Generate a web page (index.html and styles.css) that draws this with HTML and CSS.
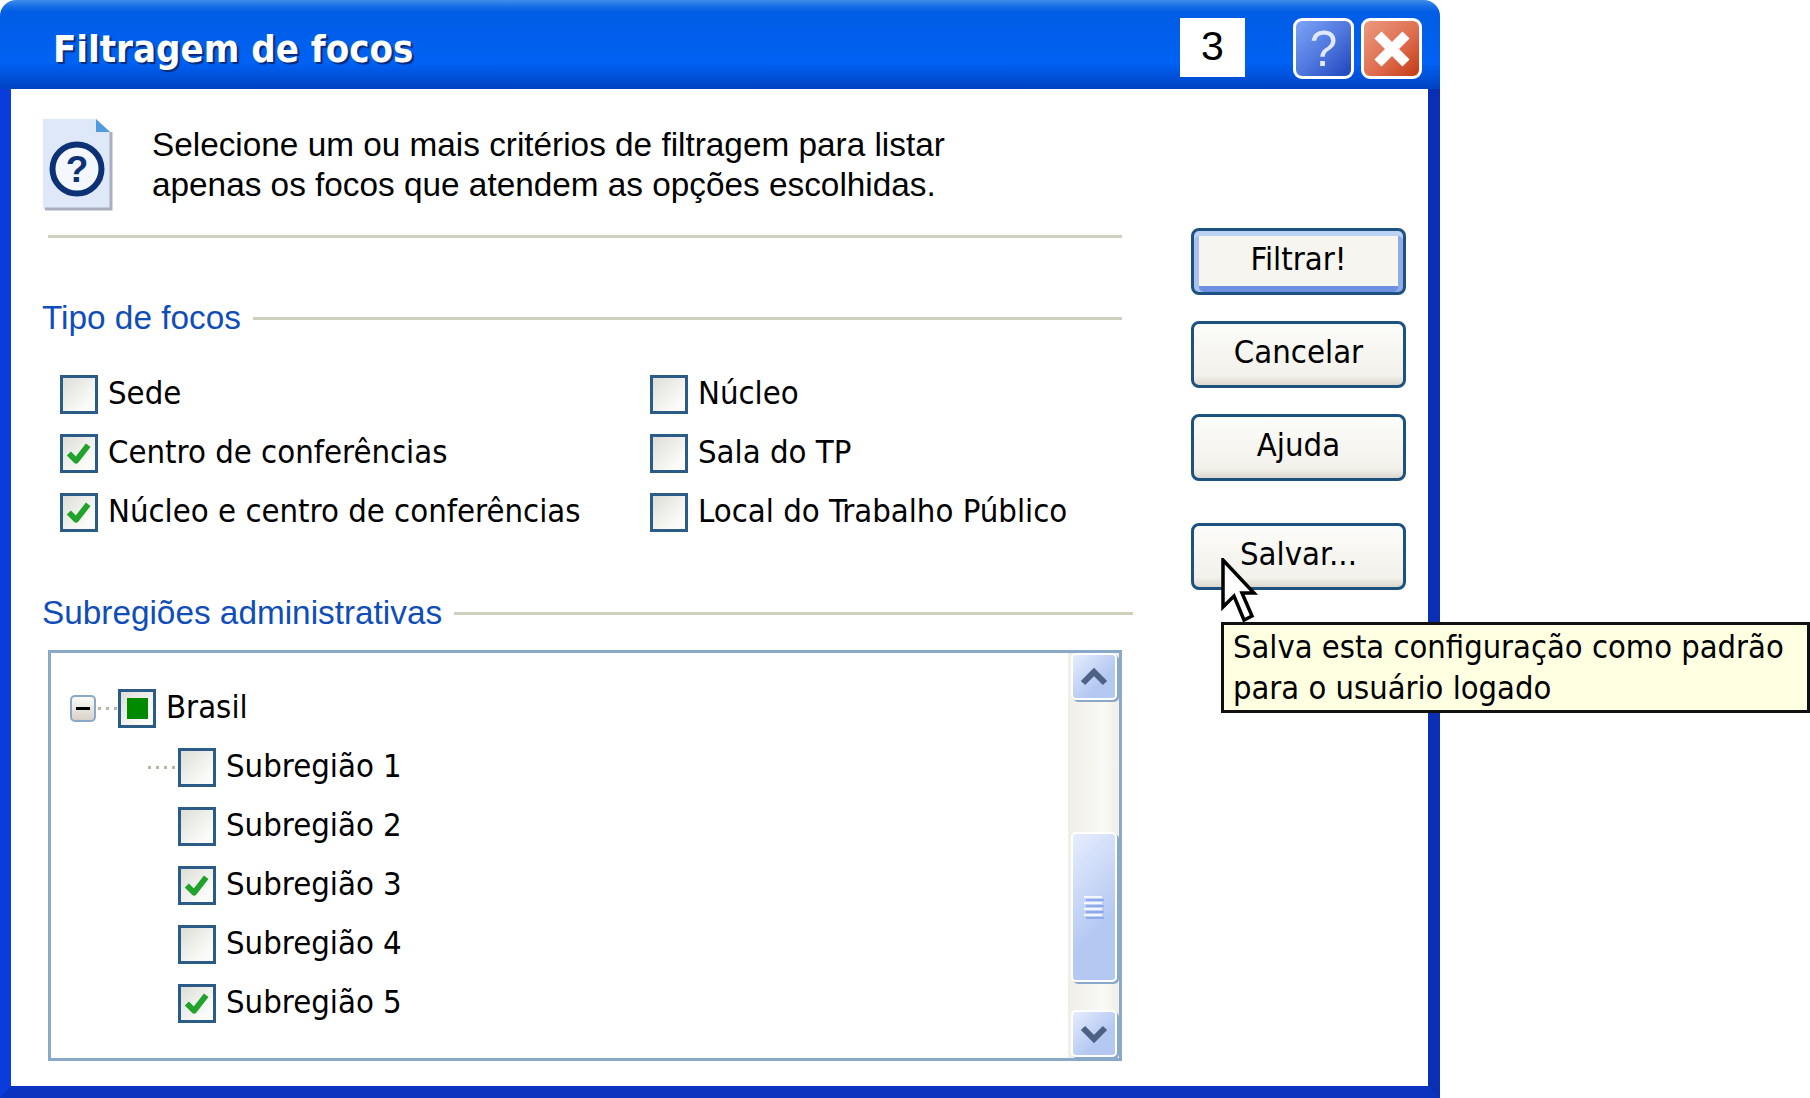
FILE: index.html
```html
<!DOCTYPE html>
<html lang="pt-BR">

    <head>
        <meta charset="UTF-8">
        <meta name="viewport" content="width=device-width, initial-scale=1.0">
        <title>Filtragem de focos</title>
        <link rel="stylesheet" href="styles.css">
    </head>

    <body>
        <svg class="defs" width="0" height="0">
            <symbol id="tick" viewBox="0 0 33 33">
                <path d="M6 16.5 L13.5 24 L26 8" fill="none" stroke="#21a32b" stroke-width="6" stroke-linejoin="round" />
            </symbol>
        </svg>

        <div class="window">
            <div class="titlebar">
                <span class="title">Filtragem de focos</span>
                <span class="counter">3</span>
                <span class="win-btn help">?</span>
                <span class="win-btn close">
                    <svg width="44" height="44" viewBox="0 0 44 44">
                        <path d="M8 8 L36 36 M36 8 L8 36" stroke="#fff" stroke-width="10" />
                    </svg>
                </span>
            </div>

            <div class="client">
                <div class="main">
                    <div class="intro">
                        <svg class="doc-icon" width="72" height="94" viewBox="0 0 72 94">
                            <path d="M1 1 H54 L68 14 V91 H1 Z" fill="#dfe8f9" />
                            <path d="M3 91 H69 V14" fill="none" stroke="#a9afbd" stroke-width="3" />
                            <path d="M54 1 L68 14 H54 Z" fill="#4f9be0" />
                            <circle cx="35" cy="51" r="24.5" fill="#f4f7fd" stroke="#0c3175" stroke-width="6" />
                            <text x="35" y="64" class="doc-mark">?</text>
                        </svg>
                        <p class="intro-text">Selecione um ou mais critérios de filtragem para listar<br>apenas os focos que atendem as opções escolhidas.</p>
                    </div>
                    <div class="divider"></div>

                    <div class="group-head">
                        <span>Tipo de focos</span>
                        <i class="group-line"></i>
                    </div>
                    <div class="types">
                        <label class="check-row"><span class="box"></span>Sede</label>
                        <label class="check-row"><span class="box"></span>Núcleo</label>
                        <label class="check-row"><span class="box"><svg><use href="#tick" /></svg></span>Centro de conferências</label>
                        <label class="check-row"><span class="box"></span>Sala do TP</label>
                        <label class="check-row"><span class="box"><svg><use href="#tick" /></svg></span>Núcleo e centro de conferências</label>
                        <label class="check-row"><span class="box"></span>Local do Trabalho Público</label>
                    </div>

                    <div class="group-head regions-head">
                        <span>Subregiões administrativas</span>
                        <i class="group-line"></i>
                    </div>
                    <div class="tree">
                        <div class="tree-list">
                            <div class="check-row">
                                <span class="toggle"><i></i></span>
                                <i class="dots root-dots"></i>
                                <span class="box"><i class="partial"></i></span>Brasil
                            </div>
                            <div class="check-row child">
                                <i class="dots"></i>
                                <span class="box"></span>Subregião 1
                            </div>
                            <div class="check-row child no-dots">
                                <span class="box"></span>Subregião 2
                            </div>
                            <div class="check-row child no-dots">
                                <span class="box"><svg><use href="#tick" /></svg></span>Subregião 3
                            </div>
                            <div class="check-row child no-dots">
                                <span class="box"></span>Subregião 4
                            </div>
                            <div class="check-row child no-dots">
                                <span class="box"><svg><use href="#tick" /></svg></span>Subregião 5
                            </div>
                        </div>
                        <div class="scrollbar">
                            <span class="sb-btn">
                                <svg width="28" height="20" viewBox="0 0 28 20"><path d="M3 16 L14 5 L25 16" fill="none" stroke="#4d6185" stroke-width="6" /></svg>
                            </span>
                            <span class="sb-thumb">
                                <svg width="22" height="24" viewBox="0 0 22 24">
                                    <path d="M1 2 H19 M1 8 H19 M1 14 H19 M1 20 H19" stroke="#f4f7fe" stroke-width="2" />
                                    <path d="M3 5 H21 M3 11 H21 M3 17 H21 M3 23 H21" stroke="#8eaaea" stroke-width="2" />
                                </svg>
                            </span>
                            <span class="sb-btn sb-down">
                                <svg width="28" height="20" viewBox="0 0 28 20"><path d="M3 4 L14 15 L25 4" fill="none" stroke="#4d6185" stroke-width="6" /></svg>
                            </span>
                        </div>
                    </div>
                </div>

                <div class="side">
                    <button type="button" class="btn default">Filtrar!</button>
                    <button type="button" class="btn">Cancelar</button>
                    <button type="button" class="btn">Ajuda</button>
                    <button type="button" class="btn save">Salvar...</button>
                </div>
            </div>

            <svg class="cursor" width="38" height="68" viewBox="-2 -2 38 68">
                <path d="M0 0 V47 L11 36 L21 60 L29 56 L19 33 H31 Z" fill="#fff" stroke="#000" stroke-width="3.5" />
            </svg>
            <div class="tooltip">Salva esta configuração como padrão<br>para o usuário logado</div>
        </div>
    </body>

</html>
```

FILE: styles.css
```css
body {
    margin: 0;
    background: #fff;
    font-family: "DejaVu Sans Condensed", "DejaVu Sans", sans-serif;
    color: #000;
}

.defs {
    display: block;
}

.window {
    position: relative;
    width: 1440px;
    height: 1098px;
    display: flex;
    flex-direction: column;
}

/* title bar */
.titlebar {
    height: 89px;
    box-sizing: border-box;
    display: flex;
    align-items: flex-start;
    padding: 18px 18px 0 53px;
    border-radius: 16px 16px 0 0;
    background: linear-gradient(#3f8ee8 0, #1a6fe6 6px, #005ce4 12px, #0060ee 45px, #0062f4 62px, #0050d8 78px, #0042c0 89px);
}

.title {
    margin-top: 8px;
    font-size: 38px;
    font-weight: bold;
    line-height: 46px;
    color: #fff;
    text-shadow: 2px 2px 1px #0b2a78;
}

.counter {
    margin-left: auto;
    width: 65px;
    height: 59px;
    background: #fff;
    font-family: "Liberation Sans", sans-serif;
    font-size: 41px;
    line-height: 56px;
    text-align: center;
}

.win-btn {
    width: 61px;
    height: 61px;
    box-sizing: border-box;
    margin-left: 7px;
    display: flex;
    align-items: center;
    justify-content: center;
    border: 3px solid #fff;
    border-radius: 9px;
}

.help {
    margin-left: 48px;
    background: linear-gradient(135deg, #7ea4f6, #4c74dc 55%, #1f45bc);
    font-family: "Liberation Sans", sans-serif;
    font-size: 50px;
    color: #dfe8fc;
}

.close {
    background: linear-gradient(135deg, #eb9a80, #df6e50 55%, #c23a12);
}

/* client area */
.client {
    flex: 1;
    display: flex;
    background: #fff;
    border-style: solid;
    border-width: 0 12px 12px 11px;
    border-color: #0040d4 #0a2fb4 #0a34c0 #0a3cdc;
}

.main {
    width: 1080px;
    padding: 29px 0 0 31px;
}

.intro {
    height: 94px;
    display: flex;
}

.doc-icon {
    flex: none;
}

.doc-mark {
    font-family: "Liberation Sans", sans-serif;
    font-size: 37px;
    font-weight: bold;
    text-anchor: middle;
    fill: #0c3175;
}

.intro-text {
    margin: 7px 0 0 38px;
    font-family: "Liberation Sans", sans-serif;
    font-size: 33.35px;
    line-height: 40px;
    white-space: nowrap;
}

.divider {
    height: 3px;
    margin: 23px 0 0 6px;
    background: #d0d0bf;
}

.group-head {
    margin-top: 60px;
    height: 40px;
    display: flex;
    align-items: center;
    font-family: "Liberation Sans", sans-serif;
    font-size: 33.35px;
    color: #0f4db8;
}

.group-line {
    flex: 1;
    height: 3px;
    margin-left: 12px;
    background: #d0d0bf;
}

.regions-head {
    margin: 61px -11px 0 0;
}

/* checkboxes */
.types {
    display: grid;
    grid-template-columns: 590px 1fr;
    row-gap: 20px;
    margin: 37px 0 0 18px;
}

.check-row {
    height: 39px;
    display: flex;
    align-items: flex-start;
    font-size: 32.6px;
    line-height: 36px;
    white-space: nowrap;
}

.box {
    flex: none;
    width: 38px;
    height: 39px;
    box-sizing: border-box;
    margin-right: 10px;
    display: flex;
    align-items: center;
    justify-content: center;
    border: 3px solid #2b5c88;
    background: linear-gradient(135deg, #deded8, #fbfbf9 80%);
}

.box svg {
    width: 32px;
    height: 33px;
}

.partial {
    width: 21px;
    height: 21px;
    background: #008a00;
}

/* tree */
.tree {
    height: 411px;
    box-sizing: border-box;
    margin: 17px 0 0 6px;
    display: flex;
    border: 3px solid #8aa8c8;
}

.tree-list {
    flex: 1;
    display: flex;
    flex-direction: column;
    gap: 20px;
    padding: 36px 0 0 19px;
}

.toggle {
    align-self: center;
    width: 26px;
    height: 27px;
    box-sizing: border-box;
    display: flex;
    align-items: center;
    justify-content: center;
    border: 2px solid #8aa8c8;
    border-radius: 5px;
    background: linear-gradient(#fbfbf8, #d8d2c6);
}

.toggle i {
    width: 14px;
    height: 3px;
    background: #000;
}

.dots {
    align-self: center;
    flex: none;
    width: 30px;
    height: 3px;
    background: repeating-linear-gradient(90deg, #b6b6a4 0 3px, transparent 3px 8px);
}

.root-dots {
    width: 20px;
    margin-left: 2px;
}

.child {
    padding-left: 78px;
}

.no-dots {
    padding-left: 108px;
}

/* scrollbar */
.scrollbar {
    flex: none;
    width: 51px;
    display: flex;
    flex-direction: column;
    align-items: center;
    background: linear-gradient(90deg, #efeee7, #fafaf6 70%, #efeee7);
}

.sb-btn,
.sb-thumb {
    width: 46px;
    box-sizing: border-box;
    display: flex;
    align-items: center;
    justify-content: center;
    border: 2px solid #fff;
    border-radius: 5px;
    background: linear-gradient(135deg, #e6edfd, #b4c8f2 65%);
    box-shadow: 2px 2px 0 #8aa8c8;
}

.sb-btn {
    height: 47px;
}

.sb-thumb {
    height: 150px;
    margin-top: 132px;
}

.sb-down {
    height: 47px;
    margin-top: 28px;
}

/* buttons */
.side {
    width: 215px;
    margin: 139px 0 0 69px;
    display: flex;
    flex-direction: column;
    gap: 26px;
}

.btn {
    height: 67px;
    padding: 0 0 6px;
    border: 3px solid #1c5180;
    border-radius: 8px;
    background: linear-gradient(#fcfcfa, #f2f1ea 85%, #dcd8cf);
    font-family: inherit;
    font-size: 32.6px;
    color: #000;
}

.default {
    background: #f6f5f0;
    box-shadow: inset 0 5px 0 #bcd2f5, inset 5px 0 0 #a9c2f0, inset -5px 0 0 #8fabe8, inset 0 -6px 0 #6d90e0;
}

.save {
    margin-top: 16px;
}

/* overlays */
.cursor {
    position: absolute;
    left: 1221px;
    top: 558px;
}

.tooltip {
    position: absolute;
    left: 1221px;
    top: 622px;
    width: 589px;
    height: 91px;
    box-sizing: border-box;
    padding: 2px 0 0 9px;
    border: 3px solid #111;
    background: #ffffe1;
    font-size: 32.4px;
    line-height: 40.5px;
    white-space: nowrap;
}
```
